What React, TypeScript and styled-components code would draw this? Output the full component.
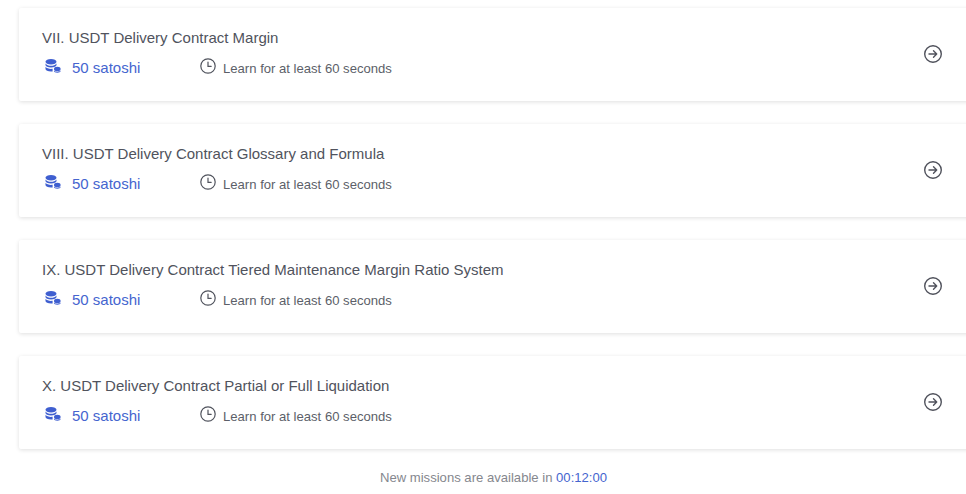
import React from 'react';
import styled, { createGlobalStyle } from 'styled-components';

const GlobalStyle = createGlobalStyle`
  html, body {
    margin: 0;
    padding: 0;
    background: #ffffff;
    overflow: hidden;
  }
  body {
    font-family: "Liberation Sans", Arial, sans-serif;
  }
`;

const Page = styled.div`
  width: 966px;
  height: 494px;
  overflow: hidden;
  padding: 8px 0 0 19px;
  box-sizing: border-box;
`;

const List = styled.div`
  width: 960px;
  display: flex;
  flex-direction: column;
  gap: 24px;
`;

const Card = styled.div`
  height: 92.5px;
  box-sizing: border-box;
  padding: 20px 23px 0 23px;
  margin-bottom: -0.5px;
  background: #fff;
  border-radius: 2px;
  box-shadow: 0 1px 4px rgba(0, 0, 0, 0.13);
  display: flex;
  justify-content: space-between;
`;

const Info = styled.div`
  display: flex;
  flex-direction: column;
`;

const Title = styled.div`
  font-size: 15px;
  line-height: 20px;
  color: #50535d;
`;

const Meta = styled.div`
  margin-top: 10px;
  display: flex;
  align-items: center;
  height: 20px;
`;

const Reward = styled.div`
  width: 158px;
  display: flex;
  align-items: center;
  margin-bottom: 2px;
  font-size: 15px;
  color: #4565cf;
`;

const CoinsSvg = styled.svg`
  width: 16px;
  height: 14px;
  margin: 0 11px 2px 3px;
  flex: none;
`;

const Time = styled.div`
  display: flex;
  align-items: center;
  font-size: 13.1px;
  color: #5c5f69;
`;

const ClockSvg = styled.svg`
  width: 16px;
  height: 16px;
  margin: 0 7px 4px 0;
  flex: none;
`;

const GoIcon = styled.svg`
  width: 20px;
  height: 20px;
  margin: 16px 13px 0 0;
  flex: none;
`;

const Footer = styled.div`
  margin-top: 22px;
  padding-left: 2px;
  text-align: center;
  font-size: 13.1px;
  line-height: 16px;
  color: #85878e;
`;

const Countdown = styled.span`
  color: #4565cf;
`;

const CoinsIcon = () => (
  <CoinsSvg viewBox="0 0 16 14" fill="#3f5fd0">
    <ellipse cx="6" cy="2.800" rx="5.500" ry="2.800" />
    <path d="M.5 4.400C1.500 6 3.700 6.700 6 6.700s4.500-.7 5.500-2.300v1.700C11.500 7.500 9 8.500 6 8.500S.5 7.500.5 6.100z" />
    <path d="M.5 7.800C1.500 9.200 3.700 9.900 6 9.900c.6 0 1.100 0 1.600-.1v2.600c-.5.1-1 .1-1.600.1-3 0-5.500-1-5.500-2.400z" />
    <ellipse cx="12.300" cy="10" rx="3.300" ry="2.200" />
    <path d="M9 11.600c.7.800 1.900 1.200 3.300 1.200s2.600-.4 3.300-1.200v.5c0 1-1.500 1.700-3.300 1.700S9 13.100 9 12.100z" />
  </CoinsSvg>
);

const ClockIcon = () => (
  <ClockSvg viewBox="0 0 16 16" fill="none" stroke="#50535d" strokeWidth="1.200" strokeLinecap="round">
    <circle cx="8" cy="8" r="7.200" />
    <path d="M8 4v4.300h3.200" />
  </ClockSvg>
);

const ArrowIcon = () => (
  <GoIcon viewBox="0 0 20 20" fill="none" stroke="#50525c" strokeWidth="1.400" strokeLinecap="round" strokeLinejoin="round">
    <circle cx="10" cy="10" r="8.300" />
    <path d="M6 10h7.500M10.500 6.800 13.700 10l-3.200 3.200" />
  </GoIcon>
);

const missions = [
  'VII. USDT Delivery Contract Margin',
  'VIII. USDT Delivery Contract Glossary and Formula',
  'IX. USDT Delivery Contract Tiered Maintenance Margin Ratio System',
  'X. USDT Delivery Contract Partial or Full Liquidation',
];

const App: React.FC = () => {
  return (
    <>
      <GlobalStyle />
      <Page>
        <List>
          {missions.map((title) => (
            <Card key={title}>
              <Info>
                <Title>{title}</Title>
                <Meta>
                  <Reward>
                    <CoinsIcon />
                    50 satoshi
                  </Reward>
                  <Time>
                    <ClockIcon />
                    Learn for at least 60 seconds
                  </Time>
                </Meta>
              </Info>
              <ArrowIcon />
            </Card>
          ))}
        </List>
        <Footer>
          New missions are available in <Countdown>00:12:00</Countdown>
        </Footer>
      </Page>
    </>
  );
};

export default App;
